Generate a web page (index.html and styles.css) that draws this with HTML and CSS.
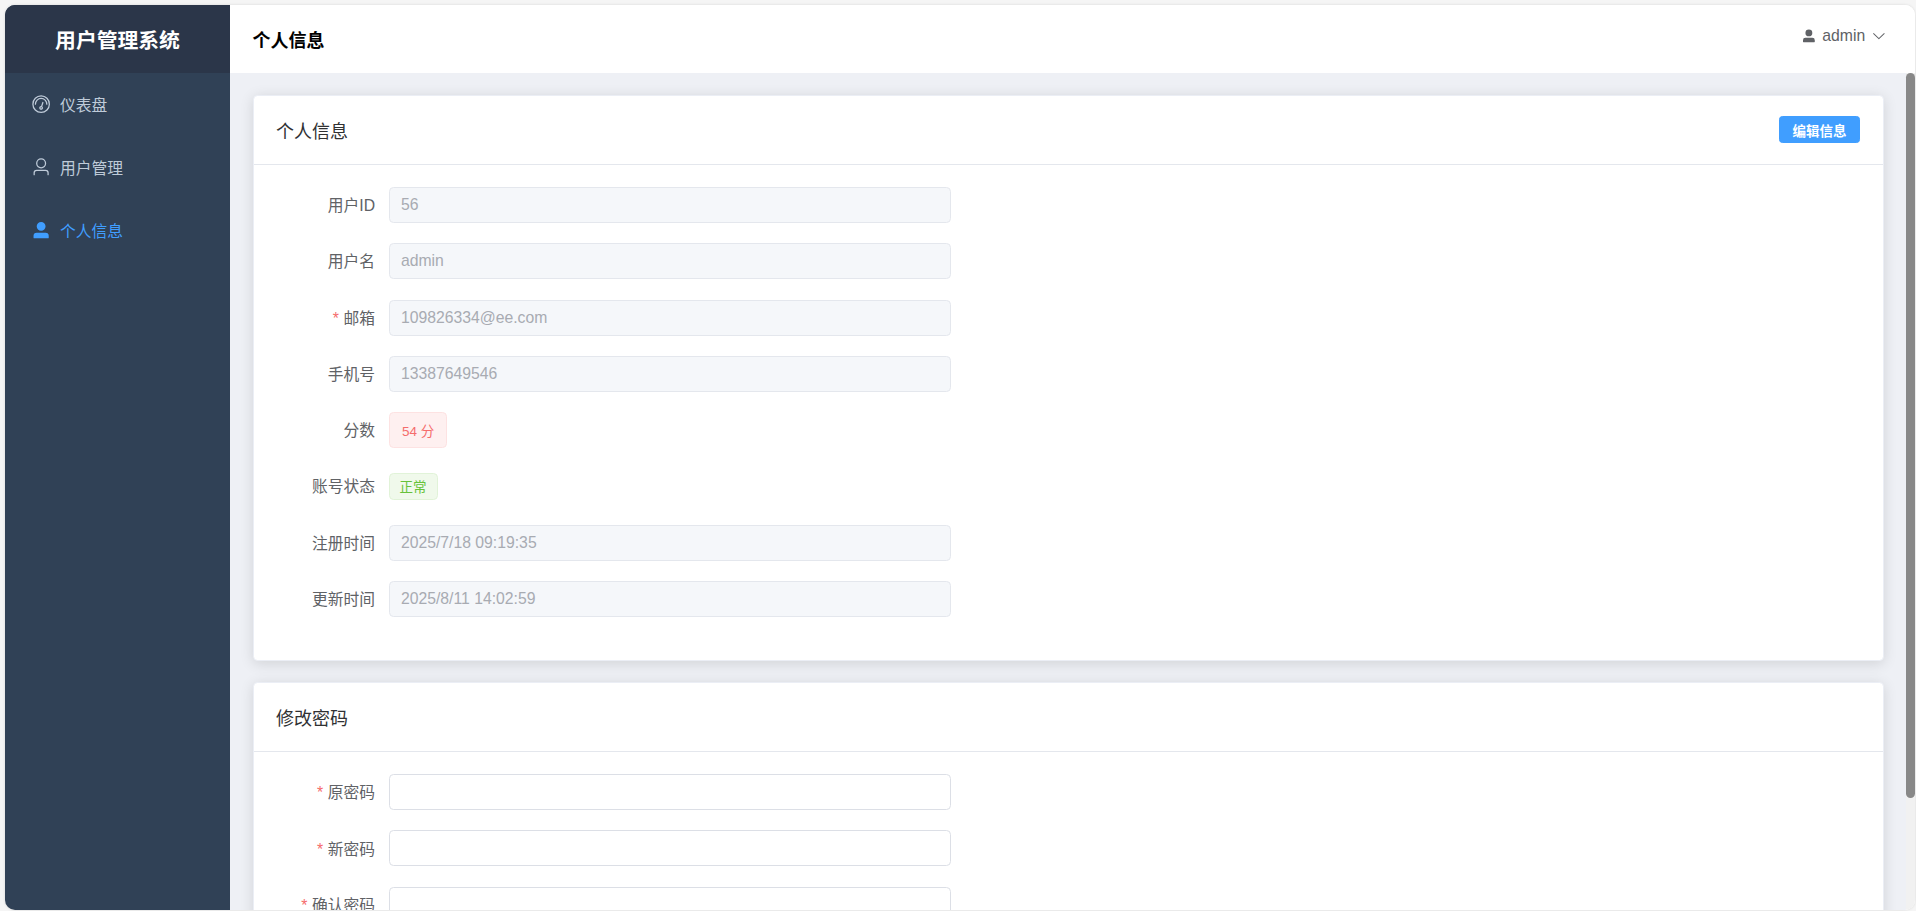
FILE: index.html
```html
<!DOCTYPE html>
<html lang="zh-CN">
<head>
<meta charset="utf-8">
<title>用户管理系统</title>
<link rel="stylesheet" href="styles.css">
</head>
<body>
<div class="app">
  <aside class="sidebar">
    <div class="logo">用户管理系统</div>
    <nav class="menu">
      <a class="menu-item">
        <span class="menu-icon"><svg viewBox="0 0 1024 1024"><path d="M512 896a384 384 0 1 0 0-768 384 384 0 0 0 0 768zm0 64a448 448 0 1 1 0-896 448 448 0 0 1 0 896z"/><path d="M192 512a320 320 0 1 1 640 0 32 32 0 1 1-64 0 256 256 0 1 0-512 0 32 32 0 0 1-64 0z"/><path d="M570.432 627.84A96 96 0 1 1 509.568 608l60.992-187.776A32 32 0 1 1 631.424 440l-60.992 187.776zM502.08 734.464a32 32 0 1 0 19.84-60.928 32 32 0 0 0-19.84 60.928z"/></svg></span>
        <span>仪表盘</span>
      </a>
      <a class="menu-item">
        <span class="menu-icon"><svg viewBox="0 0 1024 1024"><path d="M512 512a192 192 0 1 0 0-384 192 192 0 0 0 0 384zm0 64a256 256 0 1 1 0-512 256 256 0 0 1 0 512zm320 320v-96a96 96 0 0 0-96-96H288a96 96 0 0 0-96 96v96a32 32 0 1 1-64 0v-96a160 160 0 0 1 160-160h448a160 160 0 0 1 160 160v96a32 32 0 1 1-64 0z"/></svg></span>
        <span>用户管理</span>
      </a>
      <a class="menu-item active">
        <span class="menu-icon"><svg viewBox="0 0 1024 1024"><path d="M288 320a224 224 0 1 0 448 0 224 224 0 1 0-448 0zm544 608H160a32 32 0 0 1-32-32v-96a160 160 0 0 1 160-160h448a160 160 0 0 1 160 160v96a32 32 0 0 1-32 32z"/></svg></span>
        <span>个人信息</span>
      </a>
    </nav>
  </aside>
  <div class="main">
    <header class="topbar">
      <div class="page-title">个人信息</div>
      <div class="user-menu">
        <svg class="user-icon" viewBox="0 0 1024 1024"><path d="M288 320a224 224 0 1 0 448 0 224 224 0 1 0-448 0zm544 608H160a32 32 0 0 1-32-32v-96a160 160 0 0 1 160-160h448a160 160 0 0 1 160 160v96a32 32 0 0 1-32 32z"/></svg>
        <span class="user-name">admin</span>
        <svg class="arrow-icon" viewBox="0 0 1024 1024"><path d="M831.872 340.864 512 652.672 192.128 340.864a30.592 30.592 0 0 0-42.752 0 29.12 29.12 0 0 0 0 41.6L489.664 714.24a32 32 0 0 0 44.672 0l340.288-331.712a29.12 29.12 0 0 0 0-41.664 30.592 30.592 0 0 0-42.752 0z"/></svg>
      </div>
    </header>
    <div class="scroll-area">
      <main class="content">
        <section class="card">
          <div class="card-header">
            <span class="card-title">个人信息</span>
            <button class="btn-primary-small">编辑信息</button>
          </div>
          <div class="card-body">
            <div class="form-row"><label class="form-label">用户ID</label><input class="input" disabled value="56"></div>
            <div class="form-row"><label class="form-label">用户名</label><input class="input" disabled value="admin"></div>
            <div class="form-row"><label class="form-label required">邮箱</label><input class="input" disabled value="109826334@ee.com"></div>
            <div class="form-row"><label class="form-label">手机号</label><input class="input" disabled value="13387649546"></div>
            <div class="form-row"><label class="form-label">分数</label><span class="tag tag-danger">54 分</span></div>
            <div class="form-row"><label class="form-label">账号状态</label><span class="tag tag-success">正常</span></div>
            <div class="form-row"><label class="form-label">注册时间</label><input class="input" disabled value="2025/7/18 09:19:35"></div>
            <div class="form-row"><label class="form-label">更新时间</label><input class="input" disabled value="2025/8/11 14:02:59"></div>
          </div>
        </section>
        <section class="card">
          <div class="card-header">
            <span class="card-title">修改密码</span>
          </div>
          <div class="card-body">
            <div class="form-row"><label class="form-label required">原密码</label><input class="input" type="password"></div>
            <div class="form-row"><label class="form-label required">新密码</label><input class="input" type="password"></div>
            <div class="form-row"><label class="form-label required">确认密码</label><input class="input" type="password"></div>
          </div>
        </section>
      </main>
      <div class="scrollbar"><div class="scrollbar-thumb"></div></div>
    </div>
  </div>
</div>
</body>
</html>
```

FILE: styles.css
```css
* {
  box-sizing: border-box;
}

html,
body {
  height: 100%;
  overflow: hidden;
}

body {
  margin: 0;
  padding: 5px 1px 1px 5px;
  background: #f5f5f5;
  font-family: "Liberation Sans", "Noto Sans CJK SC", sans-serif;
  font-size: 15.75px;
  color: #303133;
}

.app {
  display: flex;
  height: 100%;
  border-radius: 10px;
  overflow: hidden;
  box-shadow: 0 0 3px rgba(0, 0, 0, 0.12);
}

.sidebar {
  flex: 0 0 225px;
  background: #304156;
  display: flex;
  flex-direction: column;
}

.logo {
  flex: 0 0 67.5px;
  display: flex;
  align-items: center;
  justify-content: center;
  background: #2b3649;
  color: #fff;
  font-size: 20.8px;
  font-weight: 700;
}

.menu {
  display: flex;
  flex-direction: column;
}

.menu-item {
  height: 63px;
  display: flex;
  align-items: center;
  padding-left: 22.5px;
  color: #bfcbd9;
}

.menu-item.active {
  color: #409eff;
}

.menu-icon {
  flex: 0 0 27px;
  margin-right: 5.6px;
  display: flex;
  justify-content: center;
}

.menu-icon svg {
  width: 20.25px;
  height: 20.25px;
  fill: currentColor;
}

.main {
  flex: 1;
  min-width: 0;
  display: flex;
  flex-direction: column;
  background: #fff;
}

.topbar {
  flex: 0 0 67.5px;
  display: flex;
  justify-content: space-between;
  align-items: center;
  padding: 0 28.5px 0 22.5px;
  background: #fff;
}

.page-title {
  font-size: 18px;
  font-weight: 700;
  color: #000;
}

.user-menu {
  display: flex;
  align-items: center;
  margin-bottom: 6px;
  color: #606266;
}

.user-icon {
  width: 15.75px;
  height: 15.75px;
  fill: currentColor;
}

.user-name {
  margin-left: 5.6px;
}

.arrow-icon {
  width: 15.75px;
  height: 15.75px;
  margin-left: 5.6px;
  fill: currentColor;
}

.scroll-area {
  flex: 1;
  min-height: 0;
  display: flex;
}

.content {
  flex: 1;
  min-width: 0;
  overflow: hidden;
  padding: 22.5px;
  background: #eef0f5;
}

.scrollbar {
  flex: 0 0 9px;
  background: #f1f1f1;
}

.scrollbar-thumb {
  height: 725px;
  background: #888;
  border-radius: 4.5px;
}

.card {
  background: #fff;
  border: 1px solid #ebeef5;
  border-radius: 4.5px;
  box-shadow: 0 2.25px 13.5px rgba(0, 0, 0, 0.12);
  margin-bottom: 21.7px;
}

.card-header {
  display: flex;
  justify-content: space-between;
  align-items: center;
  min-height: 68.5px;
  padding: 20.25px 22.5px;
  border-bottom: 1px solid #e4e7ed;
}

.card-title {
  font-size: 18px;
  color: #303133;
}

.card-body {
  padding: 22.5px;
}

.form-row {
  display: flex;
  align-items: center;
  height: 36px;
  margin-bottom: 20.25px;
}

.form-label {
  flex: 0 0 112.5px;
  margin-bottom: 0.8px;
  padding-right: 13.5px;
  text-align: right;
  color: #606266;
}

.required::before {
  content: "*";
  margin-right: 4.5px;
  color: #f56c6c;
}

.input {
  width: 562.5px;
  height: 36px;
  padding: 0 11.4px;
  border: 1px solid #dcdfe6;
  border-radius: 4.5px;
  background: #fff;
  font: inherit;
  color: #606266;
  outline: none;
}

.input:disabled {
  background: #f5f7fa;
  border-color: #e4e7ed;
  color: #a8abb2;
}

.tag {
  display: inline-flex;
  align-items: center;
  border: 1px solid;
  font-size: 13.5px;
  white-space: nowrap;
}

.tag-danger {
  height: 36px;
  padding: 0 11.8px 0 12.4px;
  border-radius: 4.5px;
  background: #fef0f0;
  border-color: #fde2e2;
  color: #f56c6c;
}

.tag-success {
  height: 27px;
  padding: 0 10.1px;
  border-radius: 4.5px;
  background: #f0f9eb;
  border-color: #e1f3d8;
  color: #67c23a;
}

.btn-primary-small {
  height: 27px;
  padding: 0 12.4px;
  border: 1px solid #409eff;
  border-radius: 3.4px;
  background: #409eff;
  color: #fff;
  font: inherit;
  font-size: 13.5px;
  font-weight: 700;
}
```
